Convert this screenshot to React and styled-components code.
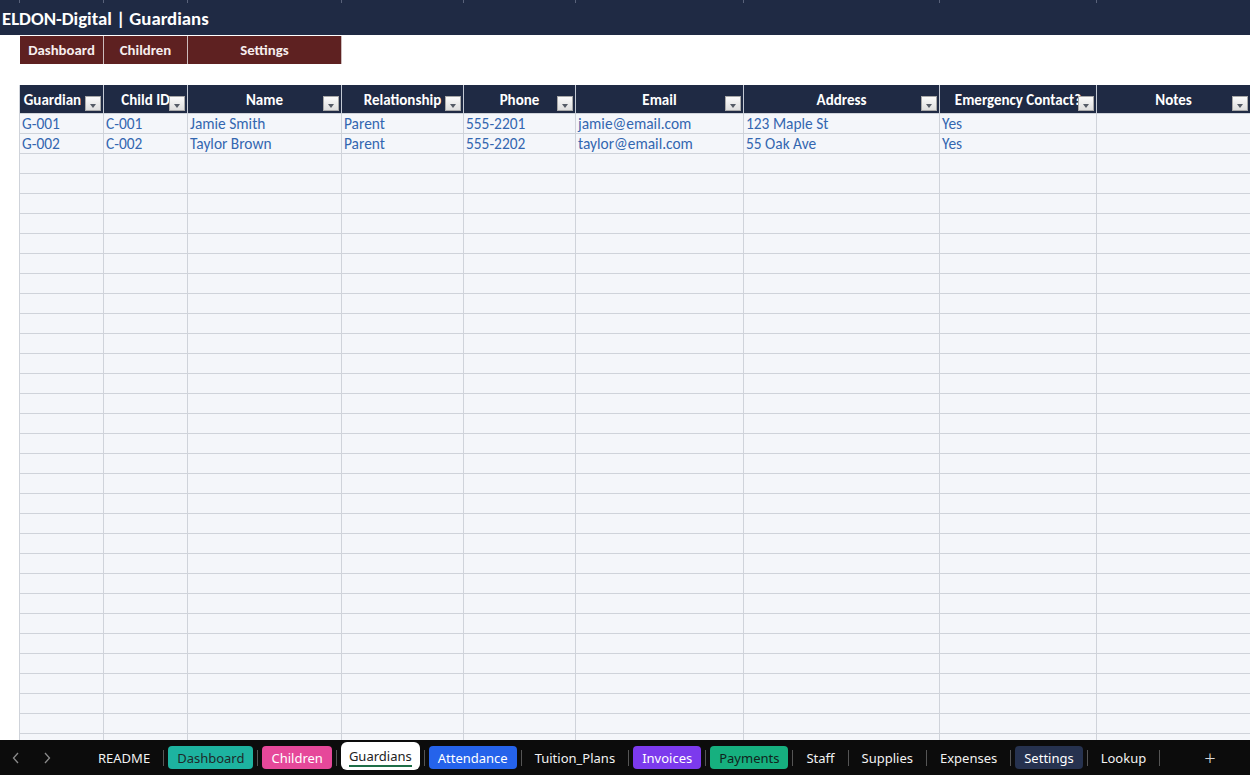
import React from 'react';
import styled, { createGlobalStyle } from 'styled-components';

const COLS = [84, 84, 154, 122, 112, 168, 196, 157, 154];
const TEMPLATE = COLS.map((w) => `${w}px`).join(' ');

const HEADERS = [
  { label: 'Guardian', pad: 18 },
  { label: 'Child ID' },
  { label: 'Name' },
  { label: 'Relationship' },
  { label: 'Phone' },
  { label: 'Email' },
  { label: 'Address' },
  { label: 'Emergency Contact?' },
  { label: 'Notes' },
];

const DATA = [
  ['G-001', 'C-001', 'Jamie Smith', 'Parent', '555-2201', 'jamie@email.com', '123 Maple St', 'Yes', ''],
  ['G-002', 'C-002', 'Taylor Brown', 'Parent', '555-2202', 'taylor@email.com', '55 Oak Ave', 'Yes', ''],
];
const EMPTY_ROWS = 30;

const TABS = [
  { label: 'README' },
  { label: 'Dashboard', bg: '#1db3a0', fg: '#1d2a2a' },
  { label: 'Children', bg: '#e6489a', fg: '#ffffff' },
  { label: 'Guardians', active: true },
  { label: 'Attendance', bg: '#2563eb', fg: '#ffffff' },
  { label: 'Tuition_Plans' },
  { label: 'Invoices', bg: '#7c3aed', fg: '#ffffff' },
  { label: 'Payments', bg: '#16b07f', fg: '#10241c' },
  { label: 'Staff' },
  { label: 'Supplies' },
  { label: 'Expenses' },
  { label: 'Settings', bg: '#26324f', fg: '#ffffff' },
  { label: 'Lookup' },
];

const Global = createGlobalStyle`
  html, body { margin: 0; padding: 0; background: #ffffff; overflow: hidden; }
  #root { width: 1250px; height: 775px; }
`;

const Page = styled.div`
  width: 1250px;
  height: 775px;
  display: flex;
  flex-direction: column;
  overflow: hidden;
  background: #ffffff;
  font-family: Carlito, Lato, "Liberation Sans", sans-serif;
`;

const Sheet = styled.div`
  flex: 1;
  min-height: 0;
  overflow: hidden;
  display: flex;
  flex-direction: column;
`;

const TitleBar = styled.div`
  flex: none;
  height: 35px;
  background: #1f2a44;
  display: flex;
  flex-direction: column;
`;

const Ticks = styled.div`
  display: grid;
  grid-template-columns: ${TEMPLATE};
  margin-left: 19px;
  height: 3px;
  border-left: 1px solid #59627a;
`;

const Tick = styled.div`
  border-right: 1px solid #59627a;
`;

const TitleText = styled.div`
  flex: 1;
  display: flex;
  align-items: center;
  padding: 0 0 1px 2px;
  color: #ffffff;
  font-weight: 700;
  font-size: 18.8px;
`;

const NavRow = styled.div`
  flex: none;
  display: flex;
  margin: 1px 0 0 20px;
  height: 28px;
`;

const NavButton = styled.div`
  width: ${(p) => p.$w}px;
  box-sizing: border-box;
  background: #5e2121;
  border-right: 1px solid #cdbdbd;
  color: #f7eeee;
  font-weight: 700;
  font-size: 14.8px;
  display: flex;
  align-items: center;
  justify-content: center;
`;

const Table = styled.div`
  flex: none;
  margin: 21px 0 0 19px;
  display: grid;
  grid-template-columns: ${TEMPLATE};
  border-left: 1px solid #cfd3da;
`;

const HeadCell = styled.div`
  position: relative;
  height: 29px;
  box-sizing: border-box;
  background: #1f2a44;
  border-right: 1px solid #c3c9d4;
  border-bottom: 1px solid #cfd3da;
  color: #ffffff;
  font-weight: 700;
  font-size: 15px;
  display: flex;
  align-items: center;
  justify-content: center;
  padding-right: ${(p) => p.$pad || 0}px;
  padding-top: 1px;
  white-space: nowrap;
  overflow: hidden;
`;

const FilterButton = styled.span`
  position: absolute;
  right: 2px;
  bottom: 2px;
  width: 16px;
  height: 15px;
  box-sizing: border-box;
  background: linear-gradient(#fbfbfb, #dedede);
  border: 1px solid #a8a8a8;
  &::after {
    content: '';
    position: absolute;
    left: 4px;
    top: 7px;
    border-left: 3.5px solid transparent;
    border-right: 3.5px solid transparent;
    border-top: 4px solid #555b66;
  }
`;

const Cell = styled.div`
  height: 20px;
  box-sizing: border-box;
  background: #f4f6fa;
  border-right: 1px solid #cfd3da;
  border-bottom: 1px solid #cfd3da;
  color: #3366b0;
  font-size: 15.4px;
  line-height: 20px;
  padding-left: 2px;
  white-space: nowrap;
  overflow: hidden;
`;

const TabBar = styled.div`
  flex: none;
  height: 35px;
  background: #0c0c0c;
  display: flex;
  align-items: center;
  font-family: "Noto Sans", "Open Sans", sans-serif;
  font-size: 13px;
`;

const Arrow = styled.div`
  width: 31px;
  display: flex;
  justify-content: center;
  color: #8a8a8a;
`;

const Arrows = styled.div`
  display: flex;
  width: 89px;
`;

const Tab = styled.div`
  position: relative;
  display: flex;
  align-items: center;
  padding: 0 ${(p) => (p.$active ? 8 : 9)}px;
  height: ${(p) => (p.$active ? 28 : 23)}px;
  margin-top: ${(p) => (p.$active ? -4 : 0)}px;
  border-radius: ${(p) => (p.$active ? 6 : 4)}px;
  background: ${(p) => (p.$active ? '#ffffff' : p.$bg || 'transparent')};
  color: ${(p) => (p.$active ? '#222222' : p.$fg || '#f2f2f2')};
  white-space: nowrap;
  ${(p) =>
    p.$active &&
    `&::after {
      content: '';
      position: absolute;
      left: 8px;
      right: 8px;
      bottom: 3px;
      height: 2px;
      background: #1e6e47;
    }`}
`;

const Sep = styled.div`
  width: 1px;
  height: 16px;
  margin: 0 4px;
  background: #555555;
`;

const Plus = styled.div`
  margin-left: 40px;
  color: #d8d8d8;
  font-size: 20px;
  font-weight: 300;
  line-height: 1;
`;

const Chevron = ({ dir }) => (
  <svg width="8" height="12" viewBox="0 0 8 12" fill="none" stroke="currentColor" strokeWidth="1.3">
    {dir === 'left' ? <polyline points="6,1 1.5,6 6,11" /> : <polyline points="2,1 6.5,6 2,11" />}
  </svg>
);

export default function App() {
  const rows = [...DATA, ...Array.from({ length: EMPTY_ROWS }, () => Array(9).fill(''))];
  return (
    <Page>
      <Global />
      <Sheet>
        <TitleBar>
          <Ticks>
            {COLS.map((_, i) => (
              <Tick key={i} />
            ))}
          </Ticks>
          <TitleText>ELDON-Digital | Guardians</TitleText>
        </TitleBar>
        <NavRow>
          <NavButton $w={84}>Dashboard</NavButton>
          <NavButton $w={84}>Children</NavButton>
          <NavButton $w={154}>Settings</NavButton>
        </NavRow>
        <Table>
          {HEADERS.map((h) => (
            <HeadCell key={h.label} $pad={h.pad}>
              {h.label}
              <FilterButton />
            </HeadCell>
          ))}
          {rows.map((r, ri) =>
            r.map((v, ci) => <Cell key={`${ri}-${ci}`}>{v}</Cell>)
          )}
        </Table>
      </Sheet>
      <TabBar>
        <Arrows>
          <Arrow>
            <Chevron dir="left" />
          </Arrow>
          <Arrow>
            <Chevron dir="right" />
          </Arrow>
        </Arrows>
        {TABS.map((t, i) => (
          <React.Fragment key={t.label}>
            {i > 0 && <Sep />}
            <Tab $bg={t.bg} $fg={t.fg} $active={t.active}>
              {t.label}
            </Tab>
          </React.Fragment>
        ))}
        <Sep />
        <Plus>+</Plus>
      </TabBar>
    </Page>
  );
}
